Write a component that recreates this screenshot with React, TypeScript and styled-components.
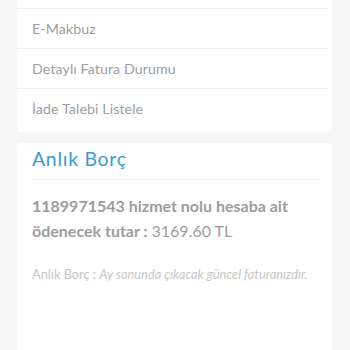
import React from 'react';
import styled, { createGlobalStyle } from 'styled-components';

const GlobalStyle = createGlobalStyle`
  html, body {
    margin: 0;
    padding: 0;
    background: #f6f6f6;
    font-family: Lato, "Open Sans", Arial, sans-serif;
  }
  #root {
    height: 350px;
    overflow: hidden;
  }
`;

const Page = styled.div`
  display: flex;
  flex-direction: column;
  gap: 11px;
  padding: 0 18px 0 17px;
  height: 350px;
  overflow: hidden;
`;

const MenuCard = styled.ul`
  list-style: none;
  margin: 0;
  padding: 8px 0 4px;
  background: #fff;
  border-radius: 0 0 4px 4px;
`;

const MenuItem = styled.li`
  height: 39px;
  display: flex;
  align-items: center;
  padding-left: 15px;
  font-size: 14.2px;
  letter-spacing: 0.1px;
  color: #9e9e9e;
  border-bottom: 1px solid #f0f0f0;
  margin-right: 4px;

  &:first-child {
    border-top: 1px solid #f0f0f0;
  }

  &:last-child {
    border-bottom: none;
  }
`;

const DebtCard = styled.section`
  flex: 1;
  background: #fff;
  border-radius: 4px 4px 0 0;
  padding: 0 12px 0 15px;
`;

const Title = styled.h2`
  margin: 0;
  height: 36px;
  display: flex;
  align-items: flex-end;
  font-size: 19.5px;
  font-weight: 400;
  letter-spacing: 0.7px;
  color: #3b9ad2;
  border-bottom: 1px solid #f0f0f0;
`;

const TitleText = styled.span`
  line-height: 22px;
  position: relative;
  top: -9px;
`;

const Amount = styled.p`
  margin: 13px 0 0;
  font-size: 16px;
  line-height: 25px;
  font-weight: 700;
  color: #9d9d9d;
`;

const Value = styled.span`
  font-weight: 400;
`;

const Note = styled.p`
  margin: 23px 0 0;
  font-size: 12.8px;
  color: #c6c6c6;
  white-space: nowrap;
`;

const NoteText = styled.em`
  font-style: italic;
`;

const menu = ['E-Makbuz', 'Detaylı Fatura Durumu', 'İade Talebi Listele'];

const App = () => {
  return (
    <>
      <GlobalStyle />
      <Page>
        <MenuCard>
          {menu.map((item) => (
            <MenuItem key={item}>{item}</MenuItem>
          ))}
        </MenuCard>
        <DebtCard>
          <Title>
            <TitleText>Anlık Borç</TitleText>
          </Title>
          <Amount>
            1189971543 hizmet nolu hesaba ait ödenecek tutar : <Value>3169.60 TL</Value>
          </Amount>
          <Note>
            Anlık Borç : <NoteText>Ay sonunda çıkacak güncel faturanızdır.</NoteText>
          </Note>
        </DebtCard>
      </Page>
    </>
  );
};

export default App;
